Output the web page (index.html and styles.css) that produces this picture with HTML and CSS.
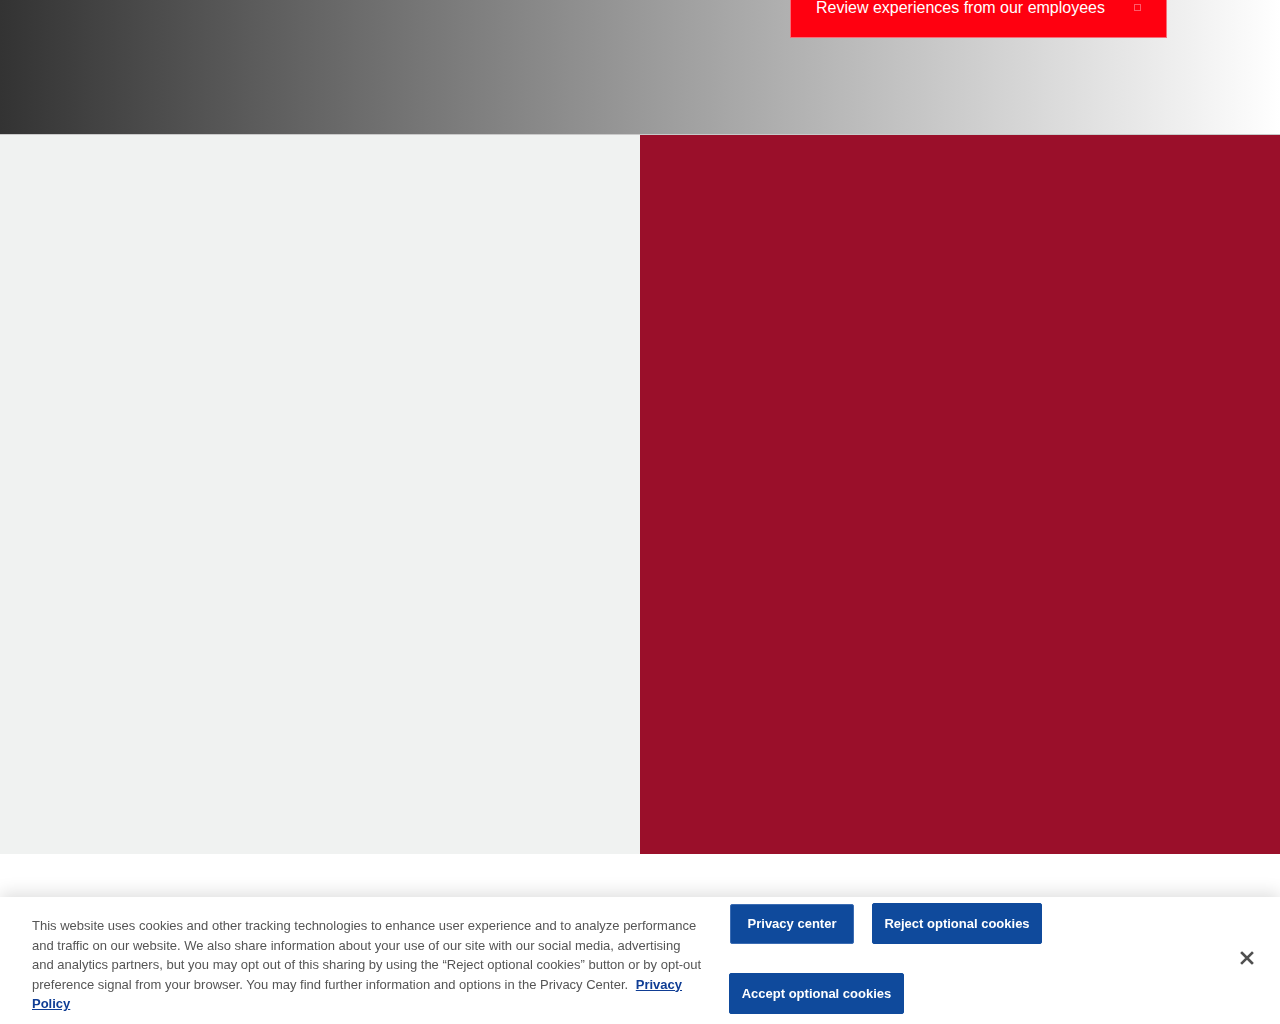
FILE: index.html
```html
<!DOCTYPE html>
<html lang="en">
<head>
<meta charset="utf-8">
<title>Careers</title>
<link rel="stylesheet" href="styles.css">
</head>
<body>
<header class="hero">
  <a class="cta" href="#">
    <span class="cta-text">Review experiences from our employees</span>
    <span class="cta-icon"></span>
  </a>
</header>
<section class="panels">
  <div class="panel panel-light"></div>
  <div class="panel panel-red"></div>
</section>
<div class="cookie-banner">
  <p class="cookie-text">This website uses cookies and other tracking technologies to enhance user experience and to analyze performance and traffic on our website. We also share information about your use of our site with our social media, advertising and analytics partners, but you may opt out of this sharing by using the “Reject optional cookies” button or by opt-out preference signal from your browser. You may find further information and options in the Privacy Center. <a class="policy" href="#">Privacy Policy</a></p>
  <div class="cookie-actions">
    <button class="btn btn-privacy">Privacy center</button>
    <button class="btn btn-reject">Reject optional cookies</button>
    <button class="btn btn-accept">Accept optional cookies</button>
  </div>
  <button class="close" aria-label="Close">
    <svg width="14" height="14" viewBox="0 0 14 14"><path d="M2 2 L12 12 M12 2 L2 12" stroke="#505050" stroke-width="2.6" stroke-linecap="square"/></svg>
  </button>
</div>
</body>
</html>
```
FILE: styles.css
```css
* { box-sizing: border-box; }
html, body { margin: 0; padding: 0; }
body {
  font-family: "Liberation Sans", Arial, Helvetica, sans-serif;
  background: #fff;
  height: 1024px;
  overflow: hidden;
}
.hero {
  height: 134px;
  background: linear-gradient(to right, #333333 0%, #ffffff 100%);
  display: flex;
  align-items: flex-start;
  padding-left: 790px;
}
.cta {
  display: flex;
  align-items: center;
  width: 377px;
  height: 60px;
  margin-top: -22px;
  background: #ff0010;
  border: 1px solid #f3707a;
  border-top: none;
  text-decoration: none;
  color: #fff;
  padding: 0 25px 0 25px;
}
.cta-text {
  font-size: 16px;
  flex: 1;
}
.cta-icon {
  width: 7px;
  height: 7px;
  border: 1px solid #ff5a68;
}
.panels {
  display: flex;
  height: 720px;
  border-top: 1px solid #c9c9c9;
}
.panel { flex: 1; }
.panel-light { background: #f0f2f1; }
.panel-red { background: #9a0f2a; }
.cookie-banner {
  position: fixed;
  left: 0;
  right: 0;
  bottom: 0;
  height: 127px;
  background: #fff;
  box-shadow: 0 -4px 16px rgba(0,0,0,0.13);
  display: flex;
  align-items: flex-start;
  padding: 0 0 0 32px;
}
.cookie-text {
  flex: 0 0 674px;
  padding-right: 3px;
  margin: 19px 0 0 0;
  font-size: 13px;
  line-height: 19.5px;
  color: #555;
}
.policy {
  color: #0f3d94;
  font-weight: bold;
  margin-left: 4px;
}
.cookie-actions {
  flex: 0 0 340px;
  margin-left: 23px;
  display: flex;
  flex-wrap: wrap;
  align-items: center;
  column-gap: 18px;
  row-gap: 29px;
  padding-top: 6px;
}
.btn {
  font-family: "Liberation Sans", Arial, sans-serif;
  font-weight: bold;
  font-size: 13px;
  color: #fff;
  background: #0f4a9c;
  border: 1px solid #0f4a9c;
  border-radius: 2px;
  height: 41px;
  padding: 0 11px;
  cursor: pointer;
}
.btn-privacy {
  height: 40px;
  width: 124px;
  margin-left: 1px;
  border-color: #3b6cb3;
}
.btn-reject { width: 170px; }
.btn-accept { width: 175px; }
.close {
  flex: 0 0 14px;
  background: none;
  border: none;
  padding: 0;
  margin: 54px 0 0 171px;
  width: 14px;
  height: 14px;
  display: flex;
}
```
